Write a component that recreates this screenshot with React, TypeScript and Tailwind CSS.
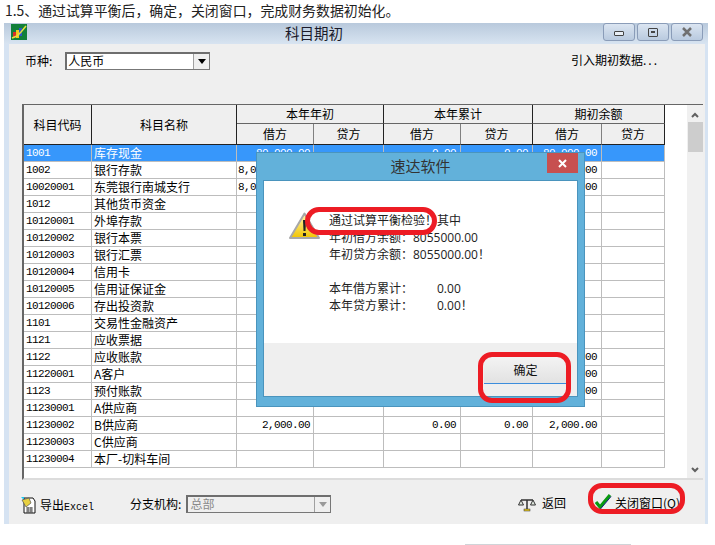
import React from 'react'

const cjk = "font-['Noto_Sans_CJK_SC',sans-serif]"

type Row = { code: string; name: string; a?: string; d?: string; e?: string; g?: string }

const rows: Row[] = [
  { code: '1001', name: '库存现金', a: '80,000.00', d: '0.00', e: '0.00', g: '80,000.00' },
  { code: '1002', name: '银行存款', a: '8,000,000.00', d: '0.00', e: '0.00', g: '8000000.00' },
  { code: '10020001', name: '东莞银行南城支行', a: '8,000,000.00', d: '0.00', e: '0.00', g: '8000000.00' },
  { code: '1012', name: '其他货币资金' },
  { code: '10120001', name: '外埠存款' },
  { code: '10120002', name: '银行本票' },
  { code: '10120003', name: '银行汇票' },
  { code: '10120004', name: '信用卡' },
  { code: '10120005', name: '信用证保证金' },
  { code: '10120006', name: '存出投资款' },
  { code: '1101', name: '交易性金融资产' },
  { code: '1121', name: '应收票据' },
  { code: '1122', name: '应收账款', a: '2,000.00', d: '0.00', e: '0.00', g: '2,000.00' },
  { code: '11220001', name: 'A客户', a: '2,000.00', d: '0.00', e: '0.00', g: '2,000.00' },
  { code: '1123', name: '预付账款', a: '2,000.00', d: '0.00', e: '0.00', g: '2,000.00' },
  { code: '11230001', name: 'A供应商' },
  { code: '11230002', name: 'B供应商', a: '2,000.00', d: '0.00', e: '0.00', g: '2,000.00' },
  { code: '11230003', name: 'C供应商' },
  { code: '11230004', name: '本厂-切料车间' },
]

function Logo() {
  return (
    <svg width="16" height="16" viewBox="0 0 16 16" className="block">
      <rect width="16" height="16" fill="#12803a" />
      <rect x="2" y="8" width="3" height="5" fill="#d8302a" />
      <rect x="5" y="6" width="3" height="8" fill="#f0c820" />
      <rect x="8" y="4" width="3" height="8" fill="#2f55c8" />
      <path d="M1 14 L6 12 L10 8 L15 2" fill="none" stroke="#e8e040" strokeWidth="1.5" />
    </svg>
  )
}

function WinBtn({ children }: { children: React.ReactNode }) {
  return (
    <div className="w-8 h-[18px] rounded-[3px] border border-[#8a9cb8] bg-gradient-to-b from-[#dbe5f1] to-[#b9cadf] flex items-center justify-center">
      {children}
    </div>
  )
}

function ArrowBox({ disabled }: { disabled?: boolean }) {
  return (
    <div className="w-4 h-full bg-[#efefef] border-l border-[#a0a0a0] flex items-center justify-center">
      <svg width="8" height="5" viewBox="0 0 8 5">
        <path d="M0 0 H8 L4 5 Z" fill={disabled ? '#9a9a9a' : '#000'} />
      </svg>
    </div>
  )
}

function Grid() {
  const mono = "font-['Liberation_Mono',monospace] text-[11px] tracking-[-0.6px]"
  const head = 'border-r border-[#222] text-center font-normal p-0'
  return (
    <table className={`border-separate border-spacing-0 table-fixed w-[641px] shrink-0 self-start ${cjk} text-[12px] text-black`}>
      <colgroup>
        <col className="w-[68px]" />
        <col className="w-[145px]" />
        <col className="w-[77px]" />
        <col className="w-[70px]" />
        <col className="w-[77px]" />
        <col className="w-[72px]" />
        <col className="w-[69px]" />
        <col className="w-[63px]" />
      </colgroup>
      <thead className="bg-[#efefef]">
        <tr className="h-[19px]">
          <th rowSpan={2} className={`${head} border-b border-b-[#222]`}>科目代码</th>
          <th rowSpan={2} className={`${head} border-b border-b-[#222]`}>科目名称</th>
          <th colSpan={2} className={`${head} border-b border-b-[#666]`}>本年年初</th>
          <th colSpan={2} className={`${head} border-b border-b-[#666]`}>本年累计</th>
          <th colSpan={2} className={`${head} border-b border-b-[#666]`}>期初余额</th>
        </tr>
        <tr className="h-[21px]">
          {['借方', '贷方', '借方', '贷方', '借方', '贷方'].map((t, i) => (
            <th key={i} className={`p-0 text-center font-normal border-r border-b border-b-[#222] ${i % 2 ? 'border-r-[#222]' : 'border-r-[#808080]'}`}>{t}</th>
          ))}
        </tr>
      </thead>
      <tbody>
        {rows.map((r, i) => {
          const sel = i === 0
          const cell = 'h-[17px] p-0 border-r border-b border-[#bdbdbd] overflow-hidden whitespace-nowrap leading-none'
          const num = `${cell} ${mono} text-right pr-[4px]`
          return (
            <tr key={r.code} className={sel ? 'bg-[#3797fb] text-white' : 'bg-white'}>
              <td className={`${cell} ${mono} pl-[2px]`}>{r.code}</td>
              <td className={`${cell} pl-[2px]`}>{r.name}</td>
              <td className={`${cell} ${mono} text-right pr-[3px]`}>{r.a}</td>
              <td className={num}></td>
              <td className={num}>{r.d}</td>
              <td className={num}>{r.e}</td>
              <td className={num}>{r.g}</td>
              <td className={num}></td>
            </tr>
          )
        })}
      </tbody>
    </table>
  )
}

function Scrollbar() {
  return (
    <div className="w-[16px] h-full bg-[#f0f0f0] flex flex-col items-center">
      <svg width="8" height="6" viewBox="0 0 8 6" className="mt-[7px]">
        <path d="M1 5 L4 2 L7 5" fill="none" stroke="#606060" strokeWidth="2" />
      </svg>
      <div className="w-[15px] h-[30px] mt-[4px] bg-[#cdcdcd]" />
      <div className="flex-1" />
      <svg width="8" height="6" viewBox="0 0 8 6" className="mb-[5px]">
        <path d="M1 1 L4 4 L7 1" fill="none" stroke="#606060" strokeWidth="2" />
      </svg>
    </div>
  )
}

function Dialog() {
  const seg = "font-['Open_Sans','Noto_Sans_CJK_SC',sans-serif]"
  return (
    <div className="absolute left-[256px] top-[152px] w-[329px] h-[255px] bg-[#62b1da] border border-[#4a94bd] flex flex-col">
      <div className="h-[27px] relative flex items-center justify-center">
        <span className={`${cjk} text-[15px] text-[#333]`}>速达软件</span>
        <div className="absolute right-[6px] top-0 w-[31px] h-[20px] bg-[#c75050] flex items-center justify-center">
          <svg width="9" height="9" viewBox="0 0 9 9">
            <path d="M1 1 L8 8 M8 1 L1 8" stroke="#fff" strokeWidth="2" />
          </svg>
        </div>
      </div>
      <div className="mx-[6px] h-[217px] bg-white border border-[#4a94bd] flex flex-col">
        <div className="flex-1 flex pl-[25px] pt-[31px]">
          <svg width="31" height="28" viewBox="0 0 31 28" className="shrink-0">
            <defs>
              <linearGradient id="warn" x1="0" y1="0" x2="0" y2="1">
                <stop offset="0" stopColor="#fff6b0" />
                <stop offset="1" stopColor="#f2c400" />
              </linearGradient>
            </defs>
            <path d="M15.5 1.5 L30 26 H1 Z" fill="url(#warn)" stroke="#a8a8a8" strokeWidth="2" strokeLinejoin="round" />
            <path d="M14 8 H17 L16.5 19 H14.5 Z" fill="#222" />
            <rect x="14" y="21" width="3" height="3" fill="#222" />
          </svg>
          <div className={`${seg} ml-[9px] text-[12px] leading-[17px] text-[#222]`}>
            <div>通过试算平衡检验！其中</div>
            <div>年初借方余额：8055000.00</div>
            <div>年初贷方余额：8055000.00！</div>
            <div className="h-[17px]" />
            <div className="flex"><span className="w-[108px]">本年借方累计：</span><span>0.00</span></div>
            <div className="flex"><span className="w-[108px]">本年贷方累计：</span><span>0.00！</span></div>
          </div>
        </div>
        <div className="h-[53px] bg-[#efefef] flex justify-end pt-[13px] pr-[10px]">
          <div className={`${cjk} w-[83px] h-[28px] bg-gradient-to-b from-[#f4f4f4] to-[#e2e2e2] border-b border-[#3c8ddc] flex items-center justify-center text-[12px] text-[#111]`}>确定</div>
        </div>
      </div>
    </div>
  )
}

function Ring({ className }: { className: string }) {
  return <div className={`absolute border-[5px] border-[#ed1c24] rounded-[14px] ${className}`} />
}

export default function App() {
  return (
    <div className={`relative w-[715px] h-[545px] bg-white overflow-hidden ${cjk}`}>
      <div className="h-[23px] pl-[5px] text-[13.9px] leading-[21px] text-[#222]">1.5、通过试算平衡后，确定，关闭窗口，完成财务数据初始化。</div>

      <div className="ml-[4px] w-[704px] h-[501px] flex flex-col bg-[#d6e3f2]">
        <div className="h-[21px] relative flex items-center pl-[281px] pb-[2px] bg-gradient-to-b from-[#b8c9dc] to-[#d8e4f1]">
          <div className="absolute left-[7px] top-[1px]"><Logo /></div>
          <span className="text-[14.5px] text-[#1a1a2a]">科目期初</span>
          <div className="absolute right-[5px] top-0 flex gap-[2px]">
            <WinBtn><div className="w-[10px] h-[5px] mt-[2px] border border-[#444] bg-[#e8eef5] rounded-[1px]" /></WinBtn>
            <WinBtn><div className="w-[10px] h-[9px] border border-[#444] rounded-[1px] flex items-center justify-center"><div className="w-[4px] h-[2px] bg-[#444]" /></div></WinBtn>
            <WinBtn>
              <svg width="12" height="10" viewBox="0 0 12 10"><path d="M2 1 L10 9 M10 1 L2 9" stroke="#707070" strokeWidth="2.5" /></svg>
            </WinBtn>
          </div>
        </div>

        <div className="ml-[5px] mr-[3px] flex-1 bg-[#efefef] flex flex-col">
          <div className="h-[60px] pl-[16px] pr-[46px] pt-[8px] flex items-start text-[12px] text-black">
            <span className="leading-[18px]">币种:</span>
            <div className="ml-[13px] w-[145px] h-[18px] bg-white border-t-2 border-l-2 border-[#6e6e6e] border-r border-b border-r-[#777] border-b-[#777] flex">
              <span className="flex-1 pl-[1px] leading-[14px]">人民币</span>
              <ArrowBox />
            </div>
            <div className="flex-1" />
            <span className="leading-[16px]">引入期初数据<span className="tracking-[2px]">...</span></span>
          </div>

          <div className="h-[377px] pl-[13px]">
            <div className="w-[681px] h-[376px] flex border-t border-l-2 border-[#666] border-b-2 border-b-[#dcdcdc] bg-white">
              <Grid />
              <div className="flex-1" />
              <Scrollbar />
            </div>
          </div>

          <div className="flex-1 pl-[11px] pr-[25px] flex items-start pt-[14px] text-[12px] text-black">
            <svg width="18" height="18" viewBox="0 0 18 18" className="mt-[1px]">
              <path d="M4 2 H13 L15 5 V17 H4 Z" fill="#fff" stroke="#111" />
              <path d="M1 1 H4 V4 Z" fill="#18c8f0" />
              <path d="M2 4 L9 2 L11 7 L6 11 Z" fill="#e8d040" stroke="#555" strokeWidth="0.7" />
              <path d="M6 12 H13 M6 14 H13 M6 16 H13 M8 11 V16 M11 11 V16" stroke="#222" strokeWidth="0.7" />
            </svg>
            <span className="ml-[2px] leading-[18px] mt-[1px]">导出<span className="font-['Liberation_Mono',monospace] text-[10px]">Excel</span></span>
            <span className="ml-[36px] leading-[18px]">分支机构:</span>
            <div className="ml-[5px] w-[145px] h-[18px] bg-[#efefef] border-t-2 border-l-2 border-[#6e6e6e] border-r border-b border-r-[#777] border-b-[#777] flex">
              <span className="flex-1 pl-[2px] leading-[14px] text-[#8a8a8a]">总部</span>
              <ArrowBox disabled />
            </div>
            <div className="flex-1" />
            <svg width="18" height="14" viewBox="0 0 18 14" className="mt-[3px]">
              <path d="M3 2 H15 M9 2 V12" stroke="#333" strokeWidth="1.5" />
              <path d="M0.5 7 L3 2 L5.5 7 Z M12.5 7 L15 2 L17.5 7 Z" fill="#dfe8df" stroke="#333" />
              <rect x="6" y="11" width="6" height="2" fill="#e8c820" stroke="#333" strokeWidth="0.5" />
            </svg>
            <span className="ml-[6px] leading-[16px]">返回</span>
            <svg width="18" height="17" viewBox="0 0 18 17" className="ml-[28px] -mt-[2px]">
              <path d="M2 9 L6 14 L16 2" fill="none" stroke="#0a9a10" strokeWidth="3.2" />
              <path d="M6 16.5 L17 3.5" stroke="#101a80" strokeWidth="1" />
            </svg>
            <span className="ml-[3px] leading-[15px]">关闭窗口(Q)</span>
          </div>
        </div>
      </div>

      <Dialog />

      <Ring className="left-[305px] top-[207px] w-[132px] h-[28px]" />
      <Ring className="left-[478px] top-[352px] w-[93px] h-[51px]" />
      <Ring className="left-[588px] top-[483px] w-[97px] h-[31px]" />

      <div className="absolute left-[465px] top-[544px] w-[166px] h-px bg-[#d0d4d8]" />
    </div>
  )
}
